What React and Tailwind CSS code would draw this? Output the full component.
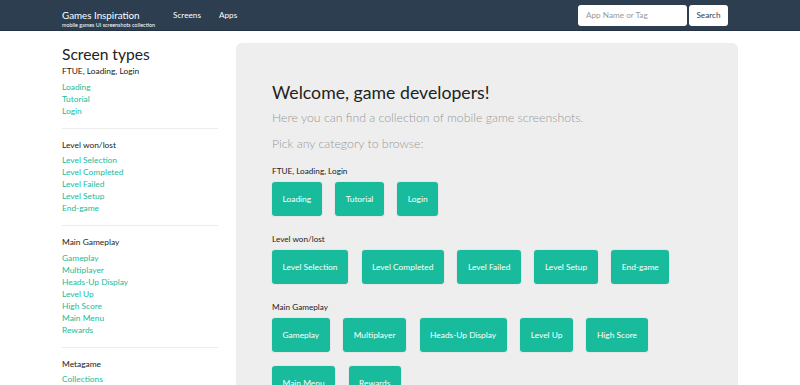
import React from "react";

const sections = [
  { title: "FTUE, Loading, Login", items: ["Loading", "Tutorial", "Login"] },
  { title: "Level won/lost", items: ["Level Selection", "Level Completed", "Level Failed", "Level Setup", "End-game"] },
  { title: "Main Gameplay", items: ["Gameplay", "Multiplayer", "Heads-Up Display", "Level Up", "High Score", "Main Menu", "Rewards"] },
  { title: "Metagame", items: ["Collections", "Inventory", "Shop"] },
];

function Btn({ children }) {
  return (
    <a className="inline-flex h-[34px] items-center rounded-[3px] bg-[#18bc9c] px-[10.5px] text-[8.4px] text-white shadow-[0_0_0_1px_rgba(0,0,0,0.03)]">
      {children}
    </a>
  );
}

export default function App() {
  return (
    <div className="h-[385px] overflow-hidden bg-white text-[#2c3e50]" style={{ fontFamily: "Lato, 'Open Sans', sans-serif" }}>
      <nav className="flex h-[31px] items-start bg-[#2c3e50] pl-[62px] pr-[72px] border-b border-[#233140]">
        <div className="flex flex-col pt-[9px] text-white">
          <span className="text-[9.8px] leading-[12px]">Games Inspiration</span>
          <span className="mt-[1px] text-[5.4px] leading-[7px]">mobile games UI screenshots collection</span>
        </div>
        <span className="ml-[18px] pt-[9px] text-[8.2px] leading-[13px] text-white">Screens</span>
        <span className="ml-[18px] pt-[9px] text-[8.2px] leading-[13px] text-white">Apps</span>
        <div className="ml-auto mt-[5px] flex items-center gap-[2px]">
          <div className="flex h-[21px] w-[109px] items-center rounded-[3px] bg-white px-[8px] text-[8.2px] text-[#999]">App Name or Tag</div>
          <div className="flex h-[21px] w-[39px] items-center justify-center rounded-[3px] bg-white text-[8.2px] text-[#2c3e50]">Search</div>
        </div>
      </nav>
      <div className="flex pl-[62px]">
        <aside className="w-[156px] shrink-0 pt-[14px]">
          <div className="text-[15.6px] leading-[18px] text-[#222]">Screen types</div>
          {sections.map((s, i) => (
            <div key={s.title} className={i === 0 ? "pt-[2px]" : "mt-[11px] border-t border-[#ececec] pt-[10px]"}>
              <div className="text-[8.4px] leading-[12px] text-[#222]">{s.title}</div>
              <div className="mt-[3.5px] flex flex-col text-[8.4px] leading-[12px] text-[#18bc9c]">
                {s.items.map((it) => (
                  <span key={it}>{it}</span>
                ))}
              </div>
            </div>
          ))}
        </aside>
        <main className="ml-[18px] mt-[12px] h-[400px] w-[502px] shrink-0 rounded-[6px] bg-[#eeeeee] px-[36px] pt-[38px]">
          <h1 className="text-[17.7px] leading-[24px] text-[#222]">Welcome, game developers!</h1>
          <p className="mt-[3px] text-[12.3px] font-light leading-[20px] text-[#999]">Here you can find a collection of mobile game screenshots.</p>
          <p className="mt-[6px] text-[12.3px] font-light leading-[20px] text-[#999]">Pick any category to browse:</p>
          {sections.slice(0, 3).map((s, i) => (
            <div key={s.title} className={i === 0 ? "mt-[11px]" : "mt-[17px]"}>
              <div className="text-[8.2px] leading-[12px] text-[#222]">{s.title}</div>
              <div className="mt-[5px] flex flex-wrap gap-x-[13.5px] gap-y-[14px]">
                {s.items.map((it) => (
                  <Btn key={it}>{it}</Btn>
                ))}
              </div>
            </div>
          ))}
        </main>
      </div>
    </div>
  );
}
